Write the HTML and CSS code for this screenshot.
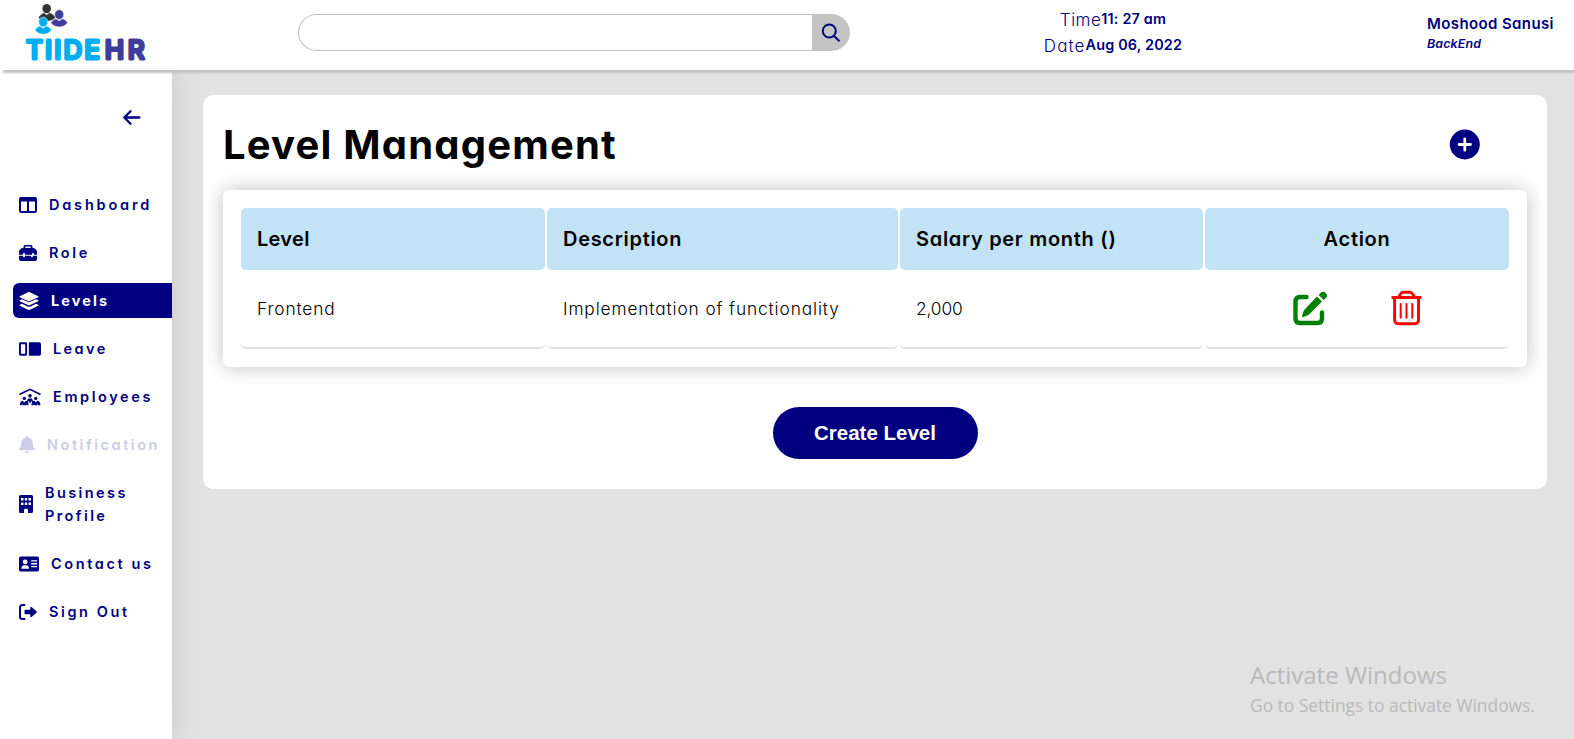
FILE: index.html
```html
<!DOCTYPE html>
<html lang="en">
<head>
<meta charset="utf-8">
<title>Tiide HR - Level Management</title>
<link rel="stylesheet" href="styles.css">
</head>
<body>
<header class="topbar">
  <svg class="logo" width="130" height="64" viewBox="20 0 130 64">
    <g fill="#333"><ellipse cx="46.7" cy="8.6" rx="4.3" ry="4.7"/><path d="M38.500 17.500Q42 13 44 13l2.700 2 2.700-2q3 0 6 4.500q-3 3.500-8.700 3.500T38.500 17.500Z"/></g>
    <g fill="#3f3d99" stroke="#fff" stroke-width=".5"><ellipse cx="59.2" cy="14.600" rx="4.500" ry="4.900"/><path d="M50.700 22.800q3-4 5.300-4l3.200 2 3.200-2q2.500 0 5.300 4-3.500 4.300-8.500 4.300t-8.500-4.300Z"/></g>
    <g fill="#00aeef" stroke="#fff" stroke-width=".5"><ellipse cx="43.200" cy="22" rx="4.500" ry="4.900"/><path d="M34.800 30q3-4 5.200-4l3.200 2 3.200-2q2.500 0 5.300 4-3.500 4.300-8.500 4.300T34.800 30Z"/></g>
    <text class="logo-text logo-cyan" x="26" y="59.200" textLength="74">TIIDE</text>
    <text class="logo-text logo-indigo" x="104.800" y="59.200" textLength="39.800">HR</text>
  </svg>
  <form class="search">
    <input class="search-input" type="text" aria-label="Search">
    <button class="search-button" type="button" aria-label="Search"><svg width="20" height="20" viewBox="0 0 20 20" fill="none" stroke="navy" stroke-width="2"><circle cx="8.300" cy="8" r="6.500"/><path d="M12.800 12.700l5.700 5.600"/></svg></button>
  </form>
  <div class="clock">
    <p class="clock-row"><span class="clock-label">Time</span><b class="clock-value">11: 27 am</b></p>
    <p class="clock-row"><span class="clock-label clock-label-date">Date</span><b class="clock-value">Aug 06, 2022</b></p>
  </div>
  <div class="user"><b class="user-name">Moshood Sanusi</b><i class="user-role">BackEnd</i></div>
</header>
<div class="layout">
  <nav class="sidebar">
    <svg class="back" width="18" height="16" viewBox="0 0 18 16" fill="none" stroke="navy" stroke-width="2.300" stroke-linecap="round" stroke-linejoin="round"><path d="M7.500 1.300L1.300 7.500l6.200 6.200M1.500 7.500h14.900"/></svg>
    <a class="item item-wide"><svg width="18" height="16" viewBox="0 0 18 16"><path fill-rule="evenodd" d="M2 0h14q2 0 2 2v12q0 2-2 2H2q-2 0-2-2V2Q0 0 2 0ZM2 4.500V14h6V4.500ZM10 4.500V14h6V4.500Z"/></svg><span>Dashboard</span></a>
    <a class="item"><svg width="18" height="16" viewBox="0 0 18 16"><path fill-rule="evenodd" d="M4.500 3V1.500Q4.500 0 6 0h6q1.500 0 1.500 1.500V3h1q.8 0 1.300.5l1.600 1.600q.6.600.6 1.500V9.700h-3V8.800q0-.9-1-.9t-1 .9v.9H6v-.9q0-.9-1-.9t-1 .9v.9H0V6.600q0-.9.600-1.500l1.600-1.600Q2.700 3 3.500 3ZM6.200 3h5.600V1.600H6.200ZM0 10.800h4v.5q0 .9 1 .9t1-.9v-.5h6v.5q0 .9 1 .9t1-.9v-.5h4V14q0 2-2 2H2q-2 0-2-2Z"/></svg><span>Role</span></a>
    <a class="item item-active"><svg width="20" height="20" viewBox="0 0 20 20"><path d="M9 1.300q1-.5 2 0l8.200 3.900q.8.500 0 1L11 10q-1 .5-2 0L.8 6.200q-.8-.5 0-1Z"/><path d="M.8 9.200L3 8.200l5.500 2.600q1.500.7 3 0L17 8.200l2.200 1q.8.500 0 1L11 14q-1 .5-2 0L.8 10.200q-.8-.5 0-1Z"/><path d="M.8 13.800l2.200-1 5.500 2.600q1.500.7 3 0l5.500-2.600 2.200 1q.8.500 0 1L11 18.700q-1 .5-2 0L.8 14.800q-.8-.5 0-1Z"/></svg><span>Levels</span></a>
    <a class="item item-snug"><svg width="22" height="14" viewBox="0 0 23 14"><path fill-rule="evenodd" d="M1.500 0H7q1.500 0 1.500 1.500v11Q8.500 14 7 14H1.500Q0 14 0 12.500v-11Q0 0 1.500 0ZM2 2v10h4.500V2Z"/><path d="M10.300 0H21q2 0 2 2v10q0 2-2 2H10.300Z"/></svg><span>Leave</span></a>
    <a class="item"><svg width="22" height="18" viewBox="0 0 23 18"><path fill="none" stroke="currentColor" stroke-width="1.800" d="M.5 6.300L11.500 1l11 5.300"/><circle cx="11.500" cy="7.800" r="1.900"/><circle cx="5.500" cy="10.500" r="1.700"/><circle cx="17.500" cy="10.500" r="1.700"/><path d="M8 14l1.500-3.500h4L15 14l-1.500 1v-2l-2 2.500-2-2.500v2ZM1 17.500q0-4.500 3-4.500l1.500 1.700L7 13q3 0 3 4.500H7.800l-.6-1.800v1.800H3.600v-1.800l-.8 1.800ZM13 17.500q0-4.500 3-4.500l1.500 1.700L19 13q3 0 3.500 4.500h-2.300l-.8-1.800v1.800h-3.600v-1.800l-.6 1.800Z"/></svg><span>Employees</span></a>
    <a class="item item-disabled"><svg width="16" height="18" viewBox="0 0 16 18"><path d="M7 1q0-1 1-1t1 1v.8q4.600.7 4.800 5.500.1 4 2 5.700.5 1.200-.8 1.200H1q-1.300 0-.8-1.200Q2.100 11.300 2.200 7.300 2.400 2.500 7 1.800ZM5.800 15.500h4.400q-.3 2-2.200 2t-2.200-2Z"/></svg><span>Notification</span></a>
    <a class="item item-snug"><svg width="14" height="18" viewBox="0 0 14 18"><path fill-rule="evenodd" d="M1.500 0h11Q14 0 14 1.500v15q0 1.500-1.500 1.500H9v-3q0-1.500-2-1.500T5 15v3H1.500Q0 18 0 16.500v-15Q0 0 1.500 0ZM2 3v2.500h2.500V3ZM5.800 3v2.500h2.400V3ZM9.500 3v2.500H12V3ZM2 7.500V10h2.500V7.500ZM5.800 7.500V10h2.400V7.500ZM9.500 7.500V10H12V7.500Z"/></svg><span>Business<br>Profile</span></a>
    <a class="item"><svg width="20" height="16" viewBox="0 0 21 16"><path fill-rule="evenodd" d="M2 0h17q2 0 2 2v12q0 2-2 2H2q-2 0-2-2V2Q0 0 2 0ZM6.500 3.200a2.500 2.500 0 1 0 .01 0ZM2.500 13h8q0-3.800-3-3.800h-2q-3 0-3 3.800ZM12.800 4v1.400H19V4ZM12.800 7v1.400H19V7ZM12.800 10v1.400H19V10Z"/></svg><span>Contact us</span></a>
    <a class="item"><svg width="18" height="16" viewBox="0 0 18 16"><path fill="none" stroke="currentColor" stroke-width="2" stroke-linecap="round" d="M5.500 1H3.500Q1 1 1 3.500v9Q1 15 3.500 15h2"/><path d="M6.500 5.800h4.800V3.500q.2-1.200 1.200-.5l5 4.300q.7.700 0 1.400l-5 4.300q-1 .7-1.200-.5v-2.300H6.500q-1 0-1-1V6.800q0-1 1-1Z"/></svg><span>Sign Out</span></a>
  </nav>
  <main class="content">
    <section class="panel">
      <div class="panel-head">
        <h1 class="title">Level Management</h1>
        <svg width="31" height="31" viewBox="0 0 31 31"><circle cx="15.800" cy="15.500" r="15" fill="navy"/><path d="M15.800 9.800v11.400M10.100 15.500h11.400" stroke="#fff" stroke-width="2.800" stroke-linecap="round"/></svg>
      </div>
      <div class="table-card">
        <table class="levels">
          <colgroup><col class="col-level"><col class="col-desc"><col class="col-pay"><col class="col-action"></colgroup>
          <tr><th class="tight">Level</th><th>Description</th><th>Salary per month ()</th><th class="center">Action</th></tr>
          <tr><td>Frontend</td><td>Implementation of functionality</td><td class="amount">2,000</td><td><div class="actions">
            <svg width="36" height="36" viewBox="0 0 36 36"><path fill="none" stroke="green" stroke-width="4.400" stroke-linecap="round" d="M14.500 7H8Q3.500 7 3.500 11.500v17Q3.500 33 8 33h17.500q4.500 0 4.500-4.500V22.500"/><path fill="green" d="M25 6.500l5 5-12.400 12.500q-2 2-7.700 3.300 1-6 3-8ZM26.600 4.900l2-2q2.600-2.400 5.200 0 2.500 2.600 0 5.200l-2 2Z"/></svg>
            <svg width="32" height="36" viewBox="0 0 32 36" fill="none" stroke="red" stroke-linecap="round"><path stroke-width="2.900" d="M1.700 7.500h27.500M7.700 6.800l2.200-3.300Q10.700 2.300 12.200 2.300h6.700q1.500 0 2.300 1.200l2.200 3.300M3.600 8.300v21.500q0 4 4 4h15.900q4 0 4-4V8.300"/><path stroke-width="2" d="M9.700 14v13.800M15.500 14v13.800M21.300 14v13.800"/></svg>
          </div></td></tr>
        </table>
      </div>
      <button class="create" type="button">Create Level</button>
    </section>
  </main>
</div>
<aside class="watermark"><p class="wm-title">Activate Windows</p><p class="wm-text">Go to Settings to activate Windows.</p></aside>
</body>
</html>
```
FILE: styles.css
```css
* { box-sizing: border-box; }
body { margin: 0; height: 739px; overflow: hidden; background: #e2e2e2; color: #000; font-family: Inter, "Noto Sans", sans-serif; font-feature-settings: "cv11"; display: flex; flex-direction: column; position: relative; }
p, h1 { margin: 0; }

/* Top bar */
.topbar { position: relative; z-index: 2; height: 70px; flex: none; display: flex; align-items: flex-start; padding-left: 20px; background: #fff; color: navy; box-shadow: 3px 3px 2px #c2c2c2; }
.logo { flex: none; }
.logo-text { font-size: 26px; font-weight: 500; stroke-width: 3px; stroke-linejoin: round; }
.logo-cyan { fill: #00aeef; stroke: #00aeef; }
.logo-indigo { fill: #3f3d99; stroke: #3f3d99; }
.search { display: flex; width: 552px; height: 37px; margin: 14px 0 0 148px; }
.search-input { flex: 1; min-width: 0; border: 1px solid #bfbfbf; border-right: 0; border-radius: 19px 0 0 19px; background: #fff; }
.search-button { width: 38px; border: 0; padding: 0; border-radius: 0 19px 19px 0; background: #c4c4c4; display: flex; align-items: center; justify-content: center; }
.clock { width: 140px; margin: 7px 0 0 193px; }
.clock-row { display: flex; justify-content: center; align-items: flex-start; height: 26px; line-height: 24px; white-space: nowrap; }
.clock-label { font-size: 17px; font-weight: 300; line-height: 26px; letter-spacing: .5px; }
.clock-label-date { letter-spacing: 1.1px; }
.clock-value { font-size: 14.4px; font-weight: 600; letter-spacing: .18px; }
.user { margin: 14px 0 0 244px; display: flex; flex-direction: column; white-space: nowrap; }
.user-name { font-size: 15px; font-weight: 600; line-height: 20px; letter-spacing: .39px; }
.user-role { font-size: 12.4px; font-weight: 600; line-height: 20px; letter-spacing: .15px; }

/* Sidebar */
.layout { flex: 1; display: flex; }
.sidebar { position: relative; z-index: 1; width: 172px; flex: none; background: #fff; padding: 40px 0 0 13px; display: flex; flex-direction: column; gap: 13px; box-shadow: 0 0 30px rgba(0,0,0,.13); }
.back { margin: 0 0 48px 110px; flex: none; }
.item { display: flex; align-items: center; gap: 12px; min-height: 35px; padding: 6px 0 6px 6px; color: navy; fill: currentColor; font-size: 14.5px; font-weight: 600; line-height: 23px; letter-spacing: 2.6px; white-space: nowrap; border-radius: 6px 0 0 6px; }
.item svg { flex: none; }
.item-wide { letter-spacing: 2.8px; }
.item-snug { letter-spacing: 2.4px; }
.item-active { background: navy; color: #fff; font-weight: 700; letter-spacing: 2.1px; }
.item-disabled { color: #cccce6; letter-spacing: 2.55px; }

/* Level panel */
.content { flex: 1; padding: 25px 27px 0 31px; }
.panel { height: 394px; padding: 20px; border-radius: 10px; background: #fff; display: flex; flex-direction: column; align-items: stretch; }
.panel-head { height: 75px; display: flex; justify-content: space-between; align-items: flex-start; padding-right: 47px; }
.panel-head svg { margin-top: 14px; }
.title { font-size: 40px; line-height: 60px; font-weight: 700; letter-spacing: 1.2px; white-space: nowrap; }
.table-card { height: 177px; padding: 16px; border-radius: 6px; background: #fff; box-shadow: 0 0 20px rgba(0,0,0,.25); }
.levels { width: 100%; table-layout: fixed; border-collapse: separate; border-spacing: 2px; }
.col-level { width: 304px; }
.col-desc { width: 351px; }
.col-pay { width: 303px; }
.col-action { width: 304px; }
th, td { padding: 0 16px; text-align: left; border-radius: 5px; white-space: nowrap; }
th { height: 62px; background: #c2e3f6; font-size: 20px; font-weight: 600; letter-spacing: .7px; }
td { height: 77px; padding-bottom: 3px; border-bottom: 2px solid #e2e2e2; font-size: 17.3px; font-weight: 300; letter-spacing: .88px; }
.tight { letter-spacing: .3px; }
.amount { letter-spacing: -.1px; }
.center { text-align: center; }
.actions { display: flex; gap: 63px; justify-content: center; }
.create { align-self: center; flex: none; width: 205px; height: 52px; margin-top: 40px; border: 0; border-radius: 26px; background: navy; color: #fff; font: bold 20.5px "Liberation Sans", Arial, sans-serif; }

/* Desktop overlay */
.watermark { position: absolute; left: 1250px; top: 658px; color: #b9b9b9; font-family: "Open Sans", sans-serif; white-space: nowrap; }
.wm-title { font-size: 24px; line-height: 34px; }
.wm-text { font-size: 17.4px; line-height: 26px; }
```
